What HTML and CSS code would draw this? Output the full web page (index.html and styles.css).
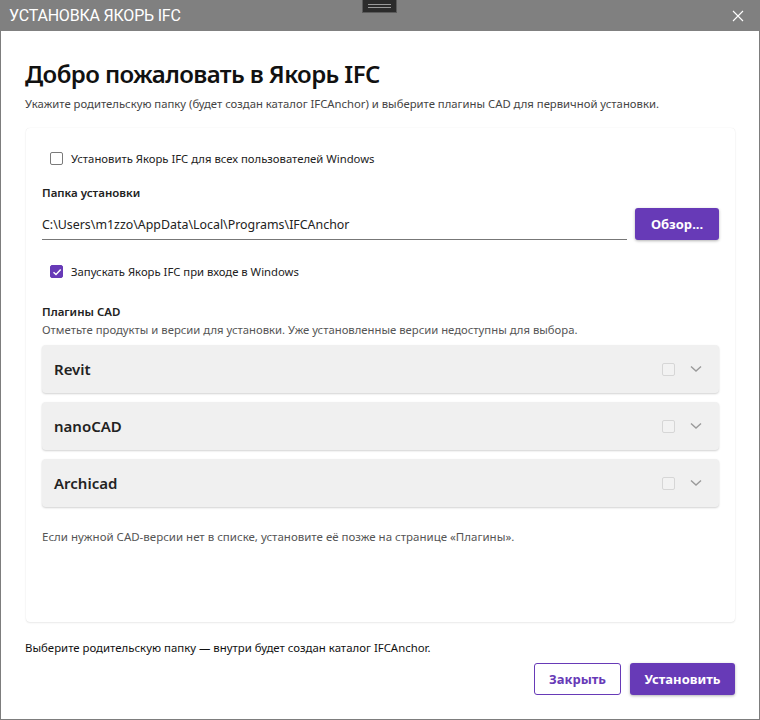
FILE: index.html
```
<!DOCTYPE html>
<html lang="ru">
<head>
  <meta charset="UTF-8">
  <title>Установка Якорь IFC</title>
  <link rel="stylesheet" href="styles.css">
</head>
<body>
  <div class="window">
    <div class="titlebar">
      <span class="title">УСТАНОВКА ЯКОРЬ IFC</span>
      <span class="grip"></span>
      <svg class="close" width="12" height="12" viewBox="0 0 12 12"><path d="M1 1L11 11M11 1L1 11" stroke="#fff" stroke-width="1.1" fill="none"/></svg>
    </div>

    <div class="content">
      <h1>Добро пожаловать в Якорь IFC</h1>
      <p class="lead">Укажите родительскую папку (будет создан каталог IFCAnchor) и выберите плагины CAD для первичной установки.</p>

      <div class="card">
        <label class="check">
          <span class="box"></span>
          <span>Установить Якорь IFC для всех пользователей Windows</span>
        </label>

        <div class="field-label">Папка установки</div>
        <div class="path-row">
          <div class="path-input">C:\Users\m1zzo\AppData\Local\Programs\IFCAnchor</div>
          <button class="btn primary browse">Обзор...</button>
        </div>

        <label class="check autostart">
          <span class="box checked">
            <svg width="10" height="10" viewBox="0 0 10 10"><path d="M1.5 5.2L4 7.6L8.7 2.6" stroke="#fff" stroke-width="1.4" fill="none"/></svg>
          </span>
          <span>Запускать Якорь IFC при входе в Windows</span>
        </label>

        <div class="field-label plugins">Плагины CAD</div>
        <p class="hint">Отметьте продукты и версии для установки. Уже установленные версии недоступны для выбора.</p>

        <div class="plugin-list">
          <div class="plugin">
            <span class="plugin-name">Revit</span>
            <span class="box disabled"></span>
            <svg class="chevron" width="12" height="8" viewBox="0 0 12 8"><path d="M1 1.5L6 6L11 1.5" stroke="#9a9a9a" stroke-width="1.4" fill="none"/></svg>
          </div>
          <div class="plugin">
            <span class="plugin-name">nanoCAD</span>
            <span class="box disabled"></span>
            <svg class="chevron" width="12" height="8" viewBox="0 0 12 8"><path d="M1 1.5L6 6L11 1.5" stroke="#9a9a9a" stroke-width="1.4" fill="none"/></svg>
          </div>
          <div class="plugin">
            <span class="plugin-name">Archicad</span>
            <span class="box disabled"></span>
            <svg class="chevron" width="12" height="8" viewBox="0 0 12 8"><path d="M1 1.5L6 6L11 1.5" stroke="#9a9a9a" stroke-width="1.4" fill="none"/></svg>
          </div>
        </div>

        <p class="note">Если нужной CAD-версии нет в списке, установите её позже на странице «Плагины».</p>
      </div>

      <p class="footer-text">Выберите родительскую папку — внутри будет создан каталог IFCAnchor.</p>
      <div class="actions">
        <button class="btn outline">Закрыть</button>
        <button class="btn primary">Установить</button>
      </div>
    </div>
  </div>
</body>
</html>
```

FILE: styles.css
```
:root {
  --purple: #673ab7;
}
* {
  box-sizing: border-box;
}
body {
  margin: 0;
  font-family: 'Noto Sans', 'Open Sans', sans-serif;
  color: #111;
  background: #fff;
}
.window {
  width: 760px;
  height: 720px;
  border: 1px solid #7d7d7d;
  border-top: none;
  display: flex;
  flex-direction: column;
}
.titlebar {
  height: 31px;
  background-color: #808080;
  display: flex;
  align-items: center;
  padding: 0 16px 0 9px;
  position: relative;
  margin: 0 -1px;
}
.title {
  font-family: 'Liberation Sans Narrow', 'Roboto', sans-serif;
  color: #fff;
  font-size: 16px;
  letter-spacing: -0.2px;
  flex: 1;
}
.grip {
  position: absolute;
  left: 362px;
  top: 0;
  width: 35px;
  height: 13px;
  background-color: #2b2b2b;
  border: 1px solid #5a5a5a;
  border-top: none;
}
.grip::before,
.grip::after {
  content: "";
  position: absolute;
  left: 5px;
  right: 5px;
  height: 1px;
  background: #9a9a9a;
}
.grip::before { top: 4px; }
.grip::after { top: 7px; }
.close {
  margin-top: 1px;
}
.content {
  flex: 1;
  padding: 26px 24px 0 24px;
  display: flex;
  flex-direction: column;
}
h1 {
  margin: 0;
  font-size: 24px;
  font-weight: 600;
  letter-spacing: -0.6px;
  line-height: 34px;
}
.lead {
  margin: 5px 0 0;
  font-size: 11.3px;
  color: #444;
  line-height: 16px;
}
.card {
  margin-top: 16px;
  height: 494px;
  border-radius: 4px;
  background: #fff;
  box-shadow: 0 1px 2px rgba(0, 0, 0, 0.08), 0 0 1px rgba(0, 0, 0, 0.12);
  padding: 23px 16px 0 16px;
  margin-left: 1px;
  margin-right: 0;
}
.check {
  display: flex;
  align-items: center;
  gap: 8px;
  font-size: 11.3px;
  color: #222;
  padding-left: 8px;
}
.box {
  width: 13px;
  height: 13px;
  border: 1.5px solid #7a7a7a;
  border-radius: 2px;
  display: inline-flex;
  align-items: center;
  justify-content: center;
  flex-shrink: 0;
}
.box.checked {
  background-color: var(--purple);
  border-color: var(--purple);
}
.box.disabled {
  border: 1px solid #d6d6d6;
  background: #f2f2f2;
}
.field-label {
  margin-top: 19px;
  font-size: 11.5px;
  font-weight: 600;
  color: #222;
}
.path-row {
  display: flex;
  align-items: flex-end;
  gap: 8px;
  margin-top: 8px;
}
.path-input {
  flex: 1;
  font-size: 12.4px;
  color: #222;
  border-bottom: 1px solid #777;
  padding: 0 0 6px 0;
}
.btn {
  font-family: 'Noto Sans', 'Open Sans', sans-serif;
  font-size: 13px;
  font-weight: 700;
  border-radius: 3px;
  height: 32px;
  cursor: pointer;
}
.btn.primary {
  background-color: var(--purple);
  color: #fff;
  border: none;
  box-shadow: 0 1px 3px rgba(0, 0, 0, 0.3);
}
.btn.outline {
  background: #fff;
  color: var(--purple);
  border: 1px solid var(--purple);
}
.browse {
  width: 84px;
}
.autostart {
  margin-top: 24px;
}
.plugins {
  margin-top: 25px;
}
.hint {
  margin: 3px 0 0;
  font-size: 11.3px;
  color: #555;
}
.plugin-list {
  display: flex;
  flex-direction: column;
  gap: 9px;
  margin-top: 8px;
}
.plugin {
  height: 48px;
  background: #f0f0f0;
  border-radius: 4px;
  box-shadow: 0 1px 2px rgba(0, 0, 0, 0.18);
  display: flex;
  align-items: center;
  padding: 0 17px 0 12px;
}
.plugin-name {
  flex: 1;
  font-size: 15px;
  font-weight: 600;
  color: #222;
}
.chevron {
  margin-left: 15px;
}
.note {
  margin: 22px 0 0;
  font-size: 11.5px;
  color: #555;
}
.footer-text {
  margin: 18px 0 0;
  font-size: 11.4px;
  color: #111;
}
.actions {
  display: flex;
  justify-content: flex-end;
  gap: 9px;
  margin-top: 8px;
}
.actions .btn.outline {
  width: 87px;
}
.actions .btn.primary {
  width: 105px;
}
```
